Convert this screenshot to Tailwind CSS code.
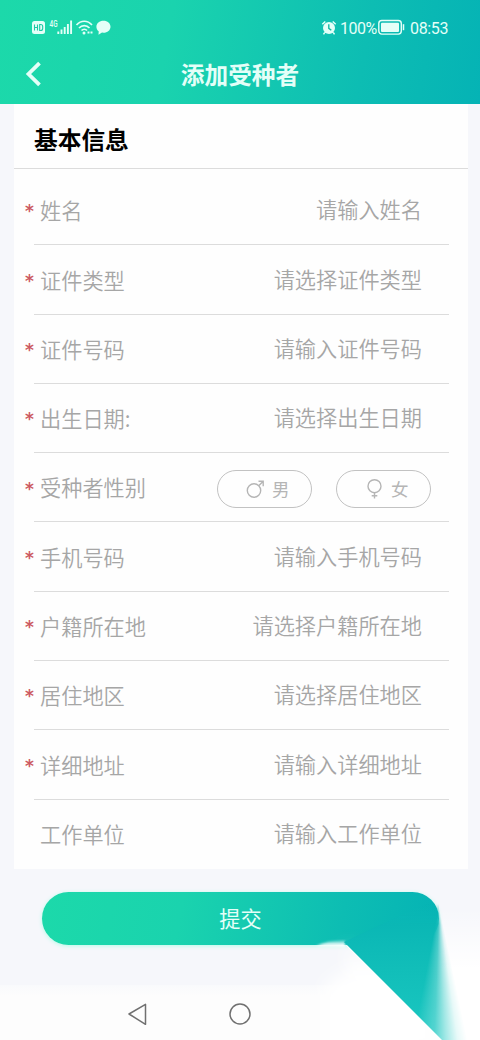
<!DOCTYPE html>
<html lang="zh-CN">
<head>
<meta charset="utf-8">
<title>添加受种者</title>
<script src="https://cdn.jsdelivr.net/npm/@tailwindcss/browser@4"></script>
</head>
<body class="w-[480px] h-[1040px] overflow-hidden bg-[#f6f7fb] font-['Noto_Sans_CJK_SC',sans-serif]">
<div class="relative flex flex-col w-[480px] h-[1040px] overflow-hidden">
  <header class="h-[104px] shrink-0 bg-[linear-gradient(100deg,#1cd9aa_0%,#1ad3ae_35%,#0dbdb3_75%,#05b3b5_100%)] text-[#e4fff8]">
    <div class="flex h-[46px] pt-[9px] pl-[31px] pr-8 items-center justify-between">
      <svg width="82" height="20" viewBox="0 0 82 20" fill="none" stroke="currentColor">
        <rect x="1" y="3" width="13" height="13" rx="2.500" fill="currentColor" stroke="none"/>
        <path d="M3.500 6.500v6M6.500 6.500v6M3.500 9.500h3M8.700 6.500v6h1a2 2 0 0 0 2-2v-2a2 2 0 0 0-2-2z" stroke="#1cc9a4" stroke-width="1.100"/>
        <text x="18.500" y="9" font-family="Roboto" font-size="9" font-weight="500" textLength="8" lengthAdjust="spacingAndGlyphs" fill="currentColor" stroke="none">4G</text>
        <path d="M27.300 13.500v2.500M30.500 11.500v4.500M33.700 9v7M36.900 6v10M40.100 2.500v13.500" stroke-width="1.900"/>
        <path d="M45.500 7c4.500-5 11-5 15.500 0M48 10c3-3.200 7.500-3.200 10.500 0M50.500 12.500c1.700-1.700 4-1.700 5.500 0" stroke-width="1.700"/>
        <circle cx="53" cy="15" r="1.500" fill="currentColor" stroke="none"/>
        <path d="M56.500 14.600h5" stroke-width="2" stroke-dasharray="2 1"/>
        <path d="M72.500 2.700c4 0 7 2.600 7 6s-3 6-7 6l-1.500-.1-3.500 2.200.2-3.500c-1.500-1.200-2.300-2.800-2.300-4.600 0-3.400 3-6 7.100-6z" fill="currentColor" stroke="none"/>
      </svg>
      <div class="flex items-center font-[Roboto,sans-serif] text-[16px] leading-5">
        <svg width="16" height="18" viewBox="0 0 16 18" fill="none" stroke="currentColor">
          <circle cx="8" cy="9" r="6" fill="currentColor" stroke="none"/>
          <path d="M1.300 5.300 4.300 2.500M14.700 5.300l-3-2.800M3.800 13.300l-1.300 2M12.200 13.300l1.300 2" stroke-width="1.500"/>
          <path d="M7.800 5.300v4l2.500 2" stroke="#14b9a4" stroke-width="1.400"/>
        </svg>
        <span class="ml-[3px] w-[37px] pt-[2px] tracking-[-0.5px]">100%</span>
        <svg class="ml-[1px]" width="28" height="17" viewBox="0 0 28 17" fill="none" stroke="currentColor">
          <rect x=".8" y="1.500" width="22.500" height="13.600" rx="3" stroke-width="1.400"/>
          <rect x="3" y="3.700" width="18" height="9.200" rx="1" fill="currentColor" stroke="none"/>
          <path d="M25.500 5.200v6" stroke-width="1.500"/>
        </svg>
        <span class="ml-[4px] w-[38px] pt-[2px] tracking-[-0.35px] whitespace-nowrap">08:53</span>
      </div>
    </div>
    <div class="grid grid-cols-[1fr_auto_1fr] items-center h-[56px]">
      <svg class="ml-[25px]" width="18" height="28" viewBox="0 0 18 28" fill="none" stroke="currentColor" stroke-width="3.800"><path d="M14.500 3.200 3.500 14l11 10.800"/></svg>
      <h1 class="text-[23.7px] font-bold leading-8">添加受种者</h1>
      <span></span>
    </div>
  </header>

  <main class="ml-[14px] w-[454px] h-[765px] shrink-0 bg-[#fefefe]">
    <h2 class="h-[65px] border-b border-[#dcdcdc] pl-5 pt-[4px] text-[23.7px] leading-[62px] font-bold text-black">基本信息</h2>
    <div class="flex flex-col pt-[7px] pl-[11px] text-[21.2px] font-[350] text-[#a6a6a6]">
      <div class="h-[69.3px] flex items-center"><i class="w-[15px] pt-[3px] not-italic font-['DejaVu_Sans'] font-bold text-[17px] text-[#cc5a62]">*</i><span class="-mt-px">姓名</span><span class="ml-auto mr-[46px] -mt-[3px]">请输入姓名</span></div>
      <div class="h-[69.3px] flex items-center relative before:absolute before:-top-px before:left-[9px] before:w-[415px] before:h-px before:bg-[#dcdcdc]"><i class="w-[15px] pt-[3px] not-italic font-['DejaVu_Sans'] font-bold text-[17px] text-[#cc5a62]">*</i><span class="-mt-px">证件类型</span><span class="ml-auto mr-[46px] -mt-[3px]">请选择证件类型</span></div>
      <div class="h-[69.3px] flex items-center relative before:absolute before:-top-px before:left-[9px] before:w-[415px] before:h-px before:bg-[#dcdcdc]"><i class="w-[15px] pt-[3px] not-italic font-['DejaVu_Sans'] font-bold text-[17px] text-[#cc5a62]">*</i><span class="-mt-px">证件号码</span><span class="ml-auto mr-[46px] -mt-[3px]">请输入证件号码</span></div>
      <div class="h-[69.3px] flex items-center relative before:absolute before:-top-px before:left-[9px] before:w-[415px] before:h-px before:bg-[#dcdcdc]"><i class="w-[15px] pt-[3px] not-italic font-['DejaVu_Sans'] font-bold text-[17px] text-[#cc5a62]">*</i><span class="-mt-px">出生日期:</span><span class="ml-auto mr-[46px] -mt-[3px]">请选择出生日期</span></div>
      <div class="h-[69.3px] flex items-center relative before:absolute before:-top-px before:left-[9px] before:w-[415px] before:h-px before:bg-[#dcdcdc]"><i class="w-[15px] pt-[3px] not-italic font-['DejaVu_Sans'] font-bold text-[17px] text-[#cc5a62]">*</i><span class="-mt-px">受种者性别</span>
        <div class="ml-auto mr-[37px] flex gap-6 pt-[2px] text-[17.5px] font-normal text-[#b5b5b5]">
          <div class="flex items-center w-[95px] h-[38px] rounded-full border-[1.5px] border-[#c2c2c2] pl-[28px] gap-[6px]">
            <svg width="20" height="20" viewBox="0 0 20 20" fill="none" stroke="currentColor" stroke-width="1.400"><circle cx="8" cy="11.500" r="6.700"/><path d="M12.700 6.700 17 2.500M12.500 2.300h4.700v4.900"/></svg><span>男</span></div>
          <div class="flex items-center w-[95px] h-[38px] rounded-full border-[1.5px] border-[#c2c2c2] pl-[28px] gap-[6px]">
            <svg width="20" height="20" viewBox="0 0 20 20" fill="none" stroke="currentColor" stroke-width="1.400"><circle cx="9.500" cy="7.200" r="6.500"/><path d="M9.500 13.700v5.800M6.700 16.700h5.600"/></svg><span>女</span></div>
        </div>
      </div>
      <div class="h-[69.3px] flex items-center relative before:absolute before:-top-px before:left-[9px] before:w-[415px] before:h-px before:bg-[#dcdcdc]"><i class="w-[15px] pt-[3px] not-italic font-['DejaVu_Sans'] font-bold text-[17px] text-[#cc5a62]">*</i><span class="-mt-px">手机号码</span><span class="ml-auto mr-[46px] -mt-[3px]">请输入手机号码</span></div>
      <div class="h-[69.3px] flex items-center relative before:absolute before:-top-px before:left-[9px] before:w-[415px] before:h-px before:bg-[#dcdcdc]"><i class="w-[15px] pt-[3px] not-italic font-['DejaVu_Sans'] font-bold text-[17px] text-[#cc5a62]">*</i><span class="-mt-px">户籍所在地</span><span class="ml-auto mr-[46px] -mt-[3px]">请选择户籍所在地</span></div>
      <div class="h-[69.3px] flex items-center relative before:absolute before:-top-px before:left-[9px] before:w-[415px] before:h-px before:bg-[#dcdcdc]"><i class="w-[15px] pt-[3px] not-italic font-['DejaVu_Sans'] font-bold text-[17px] text-[#cc5a62]">*</i><span class="-mt-px">居住地区</span><span class="ml-auto mr-[46px] -mt-[3px]">请选择居住地区</span></div>
      <div class="h-[69.3px] flex items-center relative before:absolute before:-top-px before:left-[9px] before:w-[415px] before:h-px before:bg-[#dcdcdc]"><i class="w-[15px] pt-[3px] not-italic font-['DejaVu_Sans'] font-bold text-[17px] text-[#cc5a62]">*</i><span class="-mt-px">详细地址</span><span class="ml-auto mr-[46px] -mt-[3px]">请输入详细地址</span></div>
      <div class="h-[69.3px] flex items-center relative before:absolute before:-top-px before:left-[9px] before:w-[415px] before:h-px before:bg-[#dcdcdc]"><i class="w-[15px]"></i><span class="-mt-px">工作单位</span><span class="ml-auto mr-[46px] -mt-[3px]">请输入工作单位</span></div>
    </div>
  </main>

  <button class="mt-[23px] ml-[42px] w-[397px] h-[53px] shrink-0 rounded-full bg-[linear-gradient(100deg,#1cd9aa_0%,#1ad3ae_35%,#0dbdb3_75%,#05b3b5_100%)] shadow-[0_1px_4px_#b5fbe8] pb-[2px] text-[21.2px] text-[#e4fff8]">提交</button>

  <nav class="mt-auto h-[55px] bg-gradient-to-b from-[#f9fafc] to-[#fdfdfd] to-20% flex items-center pl-[127px] text-[#707070]">
    <svg width="21" height="24" viewBox="0 0 21 24" fill="none" stroke="currentColor" stroke-width="1.500" stroke-linejoin="round"><path d="M2 13 18.500 3.300v20z"/></svg>
    <svg class="ml-[80px]" width="24" height="24" viewBox="0 0 24 24" fill="none" stroke="currentColor" stroke-width="1.500"><circle cx="12" cy="13" r="10"/></svg>
  </nav>

  <!-- White haze around the corner sweep -->
  <svg class="absolute left-[280px] top-[890px] pointer-events-none" width="200" height="150" viewBox="280 890 200 150">
    <defs>
      <linearGradient id="haze" x1="0" y1="0" x2="0" y2="1"><stop offset="0" stop-color="#fff" stop-opacity="0"/><stop offset=".4" stop-color="#fff"/></linearGradient>
      <linearGradient id="under" x1="0" y1="0" x2="0" y2="1"><stop offset="0" stop-color="#fff" stop-opacity=".1"/><stop offset=".7" stop-color="#fbfefe"/></linearGradient>
      <filter id="soft" x="-40%" y="-40%" width="180%" height="180%"><feGaussianBlur stdDeviation="8"/></filter>
      <filter id="fine"><feGaussianBlur stdDeviation=".8"/></filter>
    </defs>
    <path d="M440 908H500V1060H430V946z" fill="url(#haze)"/>
    <path d="M350 968H420V1070H325V985z" fill="#fff" filter="url(#soft)"/>
    <path d="M316 946Q329 940 345 940V947z" fill="url(#under)" filter="url(#fine)"/>
    <path d="M346 946 440 1040H400L352 975z" fill="#fff" filter="url(#soft)"/>
    <path d="M346 945.500 438 1037.500V945.500z" fill="#fff"/>
  </svg>
  <!-- Corner sweep that trails off the end of the submit button -->
  <div class="absolute left-[340px] top-[904px] w-[140px] h-[136px] pointer-events-none bg-[linear-gradient(180deg,transparent_0,#0ab7b5_20px,#11beb9_65px,#1bc8c2_100%)] [clip-path:polygon(4px_38px,103px_137px,140px_137px,140px_0,85px_0)] [mask-image:conic-gradient(from_0deg_at_99px_2px,transparent_0deg,transparent_168deg,rgba(0,0,0,.1)_172deg,rgba(0,0,0,.4)_177deg,rgba(0,0,0,.75)_182deg,#000_191deg,#000_358deg,transparent_360deg)]"></div>
</div>
</body>
</html>
